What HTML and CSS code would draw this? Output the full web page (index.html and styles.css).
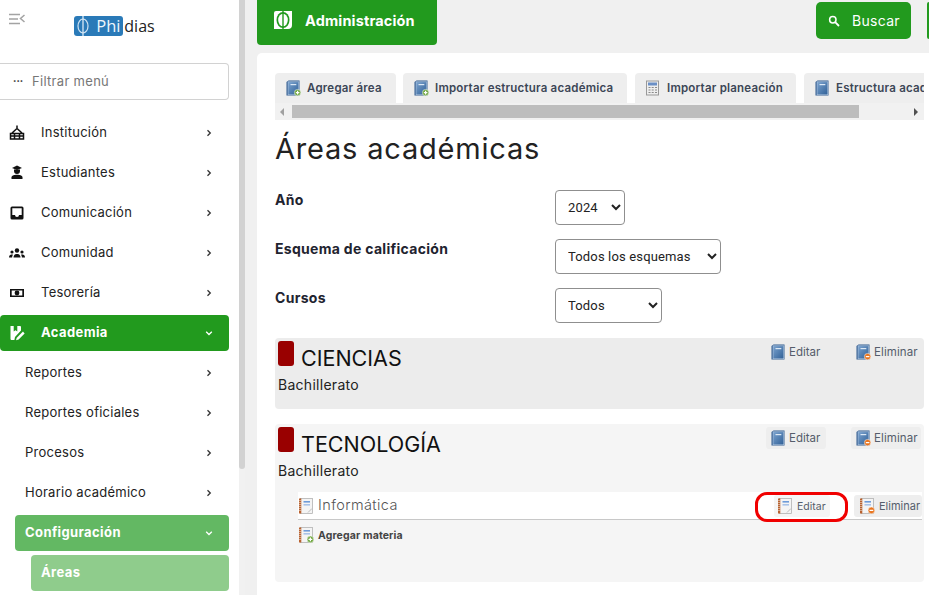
FILE: index.html
```html
<!DOCTYPE html>
<html lang="es">
<head>
<meta charset="utf-8">
<title>Áreas académicas</title>
<link rel="stylesheet" href="styles.css">
</head>
<body>
<svg class="defs" width="0" height="0" aria-hidden="true">
  <defs>
    <linearGradient id="bk" x1="0" y1="0" x2="1" y2="1"><stop offset="0" stop-color="#7ba3cf"/><stop offset="1" stop-color="#2f5f96"/></linearGradient>
    <symbol id="book" viewBox="0 0 16 16">
      <path d="M1.500 2 3.500 .5h11v15h-13z" fill="#2f5a8e"/>
      <rect x="3" y="1.800" width="10.800" height="13" fill="url(#bk)" stroke="#bcd0e6" stroke-width=".6"/>
      <rect x="5.500" y="4" width="5.800" height="1.200" fill="#dce8f4"/>
    </symbol>
    <symbol id="book-add" viewBox="0 0 16 16">
      <use href="#book"/>
      <circle cx="12.600" cy="12.600" r="3.200" fill="#6fa63f" stroke="#fff" stroke-width=".5"/>
      <path d="M12.600 10.800v3.600M10.800 12.600h3.600" stroke="#fff" stroke-width="1.200"/>
    </symbol>
    <symbol id="book-del" viewBox="0 0 16 16">
      <use href="#book"/>
      <circle cx="12.600" cy="12.600" r="3.200" fill="#e8731c" stroke="#fff" stroke-width=".5"/>
      <path d="M10.800 12.600h3.600" stroke="#fff" stroke-width="1.300"/>
    </symbol>
    <symbol id="note" viewBox="0 0 16 16">
      <rect x="2.500" y=".5" width="12" height="15" fill="#f4f4f4" stroke="#a8a8a8" stroke-width=".7"/>
      <rect x="1" y=".5" width="2.300" height="15" fill="#b9622f"/>
      <path d="M1 2.500h2.300M1 4.500h2.300M1 6.500h2.300M1 8.500h2.300M1 10.500h2.300M1 12.500h2.300" stroke="#eee" stroke-width=".5"/>
      <rect x="5.500" y="3" width="6.500" height="1.600" fill="#6e9bd8"/>
      <rect x="5.500" y="6" width="6.500" height="1.600" fill="#a9c3e8"/>
      <path d="M10 14.500l4-4" stroke="#bbb"/>
    </symbol>
    <symbol id="note-add" viewBox="0 0 16 16">
      <use href="#note"/>
      <circle cx="12.400" cy="12.400" r="3.300" fill="#6fa63f" stroke="#fff" stroke-width=".5"/>
      <path d="M12.400 10.500v3.800M10.500 12.400h3.800" stroke="#fff" stroke-width="1.200"/>
    </symbol>
    <symbol id="note-del" viewBox="0 0 16 16">
      <use href="#note"/>
      <circle cx="12.400" cy="12.400" r="3.300" fill="#e8731c" stroke="#fff" stroke-width=".5"/>
      <path d="M10.500 12.400h3.800" stroke="#fff" stroke-width="1.300"/>
    </symbol>
    <symbol id="calc" viewBox="0 0 16 16">
      <rect x="1.500" y="1" width="12" height="14" fill="#eee" stroke="#999"/>
      <rect x="3" y="2.500" width="9" height="3" fill="#6a8fc6"/>
      <path d="M3.500 7.500h2M6.700 7.500h2M10 7.500h2M3.500 10h2M6.700 10h2M10 10h2M3.500 12.500h2M6.700 12.500h2M10 12.500h2" stroke="#8a8a8a" stroke-width="1.200"/>
    </symbol>
    <symbol id="chev-r" viewBox="0 0 8 8"><path d="M2.500 1.200 5.300 4 2.500 6.800" fill="none" stroke="currentColor" stroke-width="1.300"/></symbol>
    <symbol id="chev-d" viewBox="0 0 8 8"><path d="M1.200 2.700 4 5.500l2.800-2.800" fill="none" stroke="currentColor" stroke-width="1.300"/></symbol>
  </defs>
</svg>

<div class="app">
  <aside class="sidebar">
    <div class="brand">
      <svg class="collapse" viewBox="0 0 16 12" width="16" height="12"><path d="M0 1.500h11M0 6h9M0 10.500h11" stroke="#a3a3a3" stroke-width="1.500"/><path d="M15.500 2 11.500 5.500l4 3.500" fill="none" stroke="#a3a3a3" stroke-width="1.500"/></svg>
      <div class="logo">
        <span class="logo-box">
          <svg viewBox="0 0 16 20" width="16" height="20"><ellipse cx="8" cy="10" rx="5" ry="7" fill="none" stroke="#cfe3f3" stroke-width="1.200"/><path d="M8 0v20" stroke="#e8f2fa" stroke-width="1.200"/></svg>
          <span class="logo-phi">Phi</span>
        </span><span class="logo-rest">dias</span>
      </div>
    </div>
    <div class="filter"><span class="filter-dots">•••</span><span class="filter-text">Filtrar menú</span></div>
    <nav class="menu">
      <a class="item">
        <svg class="ico" viewBox="0 0 16 16"><path d="M8 .5v3M3 8l5-4.500L13 8M1.500 8.500h13v5.500h-13zM5.500 8.500v5.500M10.500 8.500v5.500M1.500 11h13" fill="none" stroke="#111" stroke-width="1.500"/></svg>
        <span class="label">Institución</span><svg class="chev"><use href="#chev-r"/></svg>
      </a>
      <a class="item">
        <svg class="ico" viewBox="0 0 16 16"><path d="M3 3 8 .5 13 3 8 5z" fill="#111"/><path d="M5 4.500h6V6a3 3 0 0 1-6 0z" fill="#111"/><path d="M2.500 14v-1.500C2.500 10.500 5 9.700 8 9.700s5.500.8 5.500 2.800V14z" fill="#111"/></svg>
        <span class="label">Estudiantes</span><svg class="chev"><use href="#chev-r"/></svg>
      </a>
      <a class="item">
        <svg class="ico" viewBox="0 0 16 16"><path fill-rule="evenodd" d="M3 1.500h10A1.500 1.500 0 0 1 14.500 3v10a1.500 1.500 0 0 1-1.500 1.500H3A1.500 1.500 0 0 1 1.500 13V3A1.500 1.500 0 0 1 3 1.500zM3.300 3.300v6.700h2.700a2 2 0 0 0 4 0h2.700V3.300z" fill="#111"/></svg>
        <span class="label">Comunicación</span><svg class="chev"><use href="#chev-r"/></svg>
      </a>
      <a class="item">
        <svg class="ico" viewBox="0 0 16 16"><circle cx="8" cy="5.500" r="2.200" fill="#111"/><circle cx="3" cy="7" r="1.600" fill="#111"/><circle cx="13" cy="7" r="1.600" fill="#111"/><path d="M4.500 12.500c0-2.500 1.500-3.500 3.500-3.500s3.500 1 3.500 3.500zM0 12.500c0-2 1-3 3-3 .5 0 .8.100 1 .2-.6.700-.9 1.600-.9 2.800zM16 12.500c0-2-1-3-3-3-.5 0-.8.100-1 .2.600.700.9 1.600.9 2.800z" fill="#111"/></svg>
        <span class="label">Comunidad</span><svg class="chev"><use href="#chev-r"/></svg>
      </a>
      <a class="item">
        <svg class="ico" viewBox="0 0 16 16"><path fill-rule="evenodd" d="M1 4h14v8H1zM2.700 5.500v5h10.600v-5z" fill="#111"/><circle cx="8" cy="8" r="2.400" fill="#111"/></svg>
        <span class="label">Tesorería</span><svg class="chev"><use href="#chev-r"/></svg>
      </a>
      <a class="item active-1">
        <svg class="ico" viewBox="0 0 16 16"><path d="M1.500 1h3.200v5.500L6.500 5.300l1.800 1.200V1H11a1 1 0 0 1 1 1v3.500L6 12l-.6 3H2.500a1 1 0 0 1-1-1z" fill="#fff"/><path d="M14 6.500 7.800 12.700 7 15.200l2.600-.8 6-6z" fill="#fff"/></svg>
        <span class="label">Academia</span><svg class="chev"><use href="#chev-d"/></svg>
      </a>
      <a class="item sub"><span class="label">Reportes</span><svg class="chev"><use href="#chev-r"/></svg></a>
      <a class="item sub"><span class="label">Reportes oficiales</span><svg class="chev"><use href="#chev-r"/></svg></a>
      <a class="item sub"><span class="label">Procesos</span><svg class="chev"><use href="#chev-r"/></svg></a>
      <a class="item sub"><span class="label">Horario académico</span><svg class="chev"><use href="#chev-r"/></svg></a>
      <a class="item sub active-2"><span class="label">Configuración</span><svg class="chev"><use href="#chev-d"/></svg></a>
      <a class="item subsub active-3"><span class="label">Áreas</span></a>
    </nav>
  </aside>
  <div class="side-scroll"><div class="side-thumb"></div></div>

  <main class="main">
    <header class="topbar">
      <div class="section-tab">
        <svg viewBox="0 0 18 18" width="18" height="18"><path d="M2 0h16v14a4 4 0 0 1-4 4H0V2a2 2 0 0 1 2-2z" fill="#fff"/><ellipse cx="9" cy="9" rx="6.500" ry="8" fill="#229a1e"/><ellipse cx="9" cy="9" rx="4.800" ry="6.300" fill="#fff"/><path d="M9 0v18" stroke="#229a1e" stroke-width="1.400"/></svg>
        <span>Administración</span>
      </div>
      <div class="top-actions">
        <button class="btn-search">
          <svg viewBox="0 0 12 12" width="12" height="12"><circle cx="4.800" cy="4.800" r="3.200" fill="none" stroke="#fff" stroke-width="1.500"/><path d="M7.200 7.200 11 11" stroke="#fff" stroke-width="1.800"/></svg>
          <span>Buscar</span>
        </button>
        <div class="btn-next"></div>
      </div>
    </header>

    <section class="card">
      <div class="tabs-wrap">
        <div class="tabs">
          <a class="tab w1"><svg class="i16"><use href="#book-add"/></svg>Agregar área</a>
          <a class="tab w2"><svg class="i16"><use href="#book-add"/></svg>Importar estructura académica</a>
          <a class="tab w3"><svg class="i16"><use href="#calc"/></svg>Importar planeación</a>
          <a class="tab w4"><svg class="i16"><use href="#book"/></svg>Estructura académica</a>
        </div>
        <div class="hscroll">
          <span class="arrow-l"></span>
          <div class="hthumb"></div>
          <span class="arrow-r"></span>
        </div>
      </div>

      <h1 class="title">Áreas académicas</h1>

      <div class="field">
        <label class="field-label">Año</label>
        <select class="sel s1"><option>2024</option></select>
      </div>
      <div class="field">
        <label class="field-label">Esquema de calificación</label>
        <select class="sel s2"><option>Todos los esquemas</option></select>
      </div>
      <div class="field">
        <label class="field-label">Cursos</label>
        <select class="sel s3"><option>Todos</option></select>
      </div>

      <article class="area area-dark">
        <div class="area-head">
          <span class="swatch"></span>
          <h2 class="area-name">CIENCIAS</h2>
          <a class="act act-edit"><svg class="i16"><use href="#book"/></svg>Editar</a>
          <a class="act act-del"><svg class="i16"><use href="#book-del"/></svg>Eliminar</a>
        </div>
        <p class="level">Bachillerato</p>
      </article>

      <article class="area area-light">
        <div class="area-head">
          <span class="swatch"></span>
          <h2 class="area-name">TECNOLOGÍA</h2>
          <a class="act act-edit hl"><svg class="i16"><use href="#book"/></svg>Editar</a>
          <a class="act act-del hl"><svg class="i16"><use href="#book-del"/></svg>Eliminar</a>
        </div>
        <p class="level">Bachillerato</p>
        <div class="subject">
          <svg class="i16"><use href="#note"/></svg>
          <span class="subject-name">Informática</span>
          <a class="sact sact-edit"><svg class="i16"><use href="#note"/></svg>Editar</a>
          <a class="sact sact-del"><svg class="i16"><use href="#note-del"/></svg>Eliminar</a>
          <span class="callout"></span>
        </div>
        <a class="add-subject"><svg class="i16"><use href="#note-add"/></svg>Agregar materia</a>
      </article>
    </section>
  </main>
</div>
</body>
</html>
```

FILE: styles.css
```css
* { box-sizing: border-box; }
html, body { margin: 0; height: 595px; overflow: hidden; }
body { font-family: Inter, "Open Sans", sans-serif; color: #222; background: #f0f0f0; }
.defs { position: absolute; }
a { display: flex; }

.app { display: flex; width: 929px; height: 595px; overflow: hidden; }

/* sidebar */
.sidebar { width: 239px; flex: none; background: #fff; height: 595px; overflow: hidden; }
.brand { height: 63px; position: relative; display: flex; justify-content: center; padding: 16px 0 0 0; width: 229px; }
.collapse { position: absolute; left: 9px; top: 13px; }
.logo { display: flex; height: 20px; font-family: "Open Sans", sans-serif; font-size: 16px; line-height: 20px; }
.logo-box { display: flex; align-items: center; background: #2a7ab8; color: #eef6fc; border-radius: 3px; width: 49px; padding-left: 1px; }
.logo-phi { margin-left: 5px; font-size: 16.500px; }
.logo-rest { color: #222; padding-left: 1px; }
.filter { width: 229px; height: 37px; border: 1px solid #d2d2d2; border-left: 0; border-radius: 0 4px 4px 0; display: flex; align-items: center; padding: 0 0 2px 13px; font-size: 13px; color: #777; }
.filter-dots { font-size: 6px; width: 19px; color: #333; letter-spacing: 0; }
.filter-text { letter-spacing: .3px; }
.menu { display: flex; flex-direction: column; gap: 4px; margin-top: 15px; width: 229px; }
.item { height: 36px; display: flex; align-items: center; border-radius: 4px; padding-left: 9px; color: #222; font-size: 13px; letter-spacing: .25px; }
.ico { width: 16px; height: 16px; flex: none; margin-right: 16px; }
.label { flex: 1; padding-bottom: 2px; }
.chev { width: 8px; height: 8px; flex: none; margin-right: 16px; color: #333; }
.active-1 { background: #229a1e; color: #fff; font-weight: 700; letter-spacing: .4px; }
.active-1 .chev, .active-2 .chev { color: #fff; }
.sub { padding-left: 25px; }
.active-2 { margin-left: 15px; padding-left: 10px; background: #63b863; color: #fff; font-weight: 700; letter-spacing: .4px; }
.active-3 { margin-left: 31px; padding-left: 10px; background: #8fcc8c; color: #fff; font-weight: 700; letter-spacing: .4px; }
.side-scroll { width: 6px; flex: none; background: #f1f1f1; height: 595px; }
.side-thumb { height: 469px; background: #d2d2d2; border-radius: 0 0 3px 3px; }

/* main */
.main { flex: 1; min-width: 0; padding-left: 12px; display: flex; flex-direction: column; background: #f0f0f0; }
.topbar { height: 53px; flex: none; display: flex; justify-content: space-between; width: 672px; }
.section-tab { width: 180px; height: 45px; background: #229a1e; border-radius: 0 0 4px 4px; color: #fff; font-size: 14.500px; font-weight: 700; display: flex; align-items: center; padding: 0 0 5px 17px; gap: 13px; letter-spacing: .15px; }
.top-actions { display: flex; gap: 16px; padding-top: 2px; align-items: flex-start; }
.btn-search { width: 95px; height: 37px; border: 0; border-radius: 5px; background: #229a1e; color: #fff; font: 14px Inter, sans-serif; letter-spacing: .3px; display: flex; align-items: center; padding: 0 0 0 12px; gap: 12px; }
.btn-next { width: 2px; height: 37px; background: #229a1e; border-radius: 4px 0 0 4px; }

.card { flex: 1; width: 672px; background: #fff; border-radius: 5px 0 0 0; padding: 20px 5px 0 18px; min-height: 0; overflow: hidden; }

/* tabs */
.tabs-wrap { width: 649px; height: 47px; overflow: hidden; }
.tabs { display: flex; gap: 7px; height: 30px; width: 900px; }
.tab { height: 30px; flex: none; align-items: center; background: #eee; border-radius: 4px 4px 0 0; font-size: 11.500px; font-weight: 600; color: #3c4656; padding-left: 10px; gap: 6px; white-space: nowrap; letter-spacing: .22px; }
.w1 { width: 121px; }
.w2 { width: 224px; }
.w3 { width: 161px; margin-left: 1px; }
.w4 { width: 180px; margin-left: 1px; }
.i16 { width: 16px; height: 16px; flex: none; }
.hscroll { height: 17px; background: #f1f1f1; display: flex; align-items: center; position: relative; }
.hthumb { margin-left: 17px; width: 567px; height: 13px; background: #bdbdbd; }
.arrow-l, .arrow-r { position: absolute; top: 5px; width: 0; height: 0; border-top: 4px solid transparent; border-bottom: 4px solid transparent; }
.arrow-l { left: 5px; border-right: 4px solid #a0a0a0; }
.arrow-r { right: 6px; border-left: 4px solid #505050; }

.title { margin: 12px 0 0; font-size: 29px; font-weight: 400; line-height: 34px; height: 34px; color: #222; letter-spacing: .8px; }

.field { display: flex; height: 35px; margin-bottom: 14px; }
.title + .field { margin-top: 24px; }
.field-label { width: 280px; flex: none; font-size: 14px; font-weight: 700; color: #1f2430; padding-top: 1px; line-height: 18px; letter-spacing: .3px; }
.sel { height: 35px; font: 13px Roboto, sans-serif; letter-spacing: .15px; background: #fff; color: #222; border: 1px solid #8f8f8f; border-radius: 4px; padding: 0 8px; }
.s1 { width: 70px; }
.s2 { width: 166px; }
.s3 { width: 107px; }

/* areas */
.area { width: 649px; border-radius: 4px; padding: 3px 3px 0; position: relative; }
.area-dark { background: #ececec; height: 71px; margin-top: 15px; }
.area-light { background: #f5f5f5; height: 158px; margin-top: 15px; }
.area-head { display: flex; height: 25px; align-items: center; position: relative; }
.swatch { width: 16px; height: 25px; background: #990000; border-radius: 3px; flex: none; }
.area-name { margin: 8px 0 0 7px; font-size: 21.500px; font-weight: 400; color: #111; flex: 1; line-height: 26px; }
.act { align-items: center; height: 22px; font-size: 11.500px; color: #555d6b; border-radius: 3px; position: absolute; top: 0; white-space: nowrap; }
.act.hl { background: #eee; }
.act-edit { left: 488px; width: 60px; padding-left: 4px; gap: 3px; }
.act-del { left: 573px; width: 70px; padding-left: 4px; gap: 3px; letter-spacing: .1px; }
.level { margin: 10px 0 0; font-size: 14px; line-height: 18px; color: #222; letter-spacing: .28px; }

.subject { position: relative; margin: 12px 0 0 20px; width: 624px; height: 28px; background: #fff; border-bottom: 1px solid #c8c8c8; display: flex; align-items: center; padding-left: 0; }
.subject-name { font-size: 14.500px; color: #555; margin-left: 4px; flex: 1; font-weight: 300; letter-spacing: .4px; padding-bottom: 2px; }
.sact { align-items: center; height: 22px; font-size: 10.500px; color: #555d6b; border-radius: 3px; position: absolute; top: 3px; gap: 4px; background: #f5f5f5; white-space: nowrap; }
.sact-edit { left: 476px; width: 56px; padding-left: 3px; }
.sact-del { left: 556px; width: 68px; padding-left: 5px; background: #eee; font-size: 11px; }
.callout { position: absolute; left: 457px; top: 0; width: 93px; height: 30px; border: 3.500px solid #f00000; border-radius: 12px; }
.add-subject { margin: 7px 0 0 20px; align-items: center; font-size: 10.500px; font-weight: 700; color: #444; gap: 4px; letter-spacing: .12px; }
```
